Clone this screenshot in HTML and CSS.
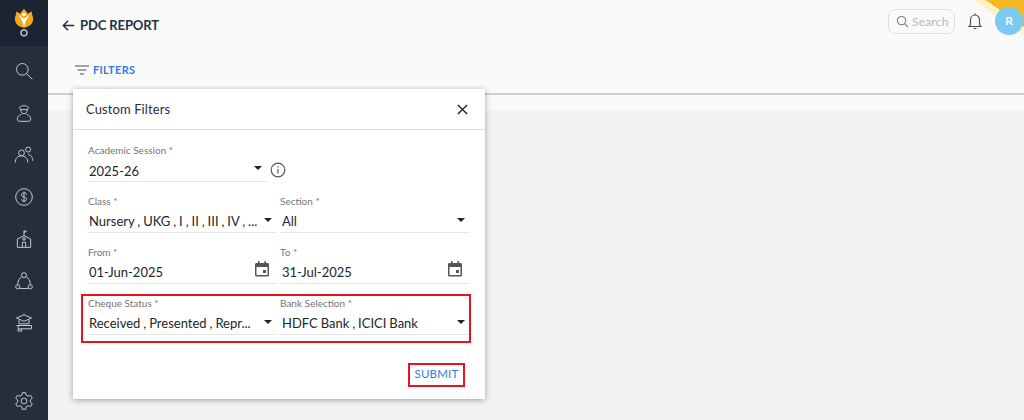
FILE: index.html
```html
<!DOCTYPE html>
<html lang="en">
<head>
<meta charset="utf-8">
<title>PDC Report</title>
<link rel="stylesheet" href="styles.css">
</head>
<body>
<div class="app">
  <nav class="sidebar">
    <div class="logo">
      <svg width="20" height="30" viewBox="0 0 24 36"><path d="M3 5l4 3 5-6 5 6 4-3 2 9c0 6-5 10-11 11C6 24 1 20 1 14z" fill="#f2a81d"/><circle cx="12" cy="9" r="2.200" fill="#fff"/><path d="M5 9l7 5 7-5-5 8-2 7-2-7z" fill="#fff"/><circle cx="12" cy="31" r="3.600" fill="none" stroke="#aab0b6" stroke-width="2"/></svg>
    </div>
    <div class="nav-icons">
      <svg class="nav-icon" viewBox="0 0 24 24"><circle cx="10" cy="10" r="7"/><path d="M15 15l7 7"/></svg>
      <svg class="nav-icon" viewBox="0 0 24 24"><path d="M6.500 5.500c2-3 9-3 11 0l-1.500 2.500H8z"/><path d="M8 8c0 6.500 8 6.500 8 0"/><path d="M9 13.500c-3 1-5 3-5 5.500 0 2 1 3 3 3h10c2 0 3-1 3-3 0-2.500-2-4.500-5-5.500"/></svg>
      <svg class="nav-icon" viewBox="0 0 24 24"><circle cx="9" cy="9.500" r="3.500"/><path d="M1.500 21c0-5 3-8 7.500-8s7.500 3 7.500 8"/><circle cx="17" cy="5.500" r="3"/><path d="M17 11.500c3 0 5.500 3 5.500 7.500"/></svg>
      <svg class="nav-icon" viewBox="0 0 24 24"><circle cx="12" cy="12" r="10"/><path d="M15 9c0-1.500-1.500-2-3-2s-3 .8-3 2.500 1.500 2 3 2.500 3 1 3 2.500-1.500 2.500-3 2.500-3-.8-3-2M12 5.500v13"/></svg>
      <svg class="nav-icon" viewBox="0 0 24 24"><path d="M4 22V12l8-4 8 4v10z"/><path d="M12 8V2l3 1-3 1"/><circle cx="12" cy="12" r="1.500"/><path d="M10 22v-6h4v6"/></svg>
      <svg class="nav-icon" viewBox="0 0 24 24"><circle cx="12" cy="5" r="3"/><circle cx="4.500" cy="19" r="2.500"/><circle cx="19.500" cy="19" r="2.500"/><path d="M9.500 6.500C6.500 8.500 4.500 12 4.300 16.500M14.500 6.500c3 2 5 5.500 5.200 10M7 21h10"/></svg>
      <svg class="nav-icon" viewBox="0 0 24 24"><path d="M12 2l9 4-9 4-9-4z"/><path d="M6 8v5h12V8M5 15h16v4H5zM3 15l4 0M5 19v3l2-1 2 1v-3"/></svg>
    </div>
    <svg class="nav-icon gear" viewBox="0 0 24 24"><circle cx="12" cy="12" r="3.500"/><path d="M10 2h4l.6 3 2.400 1.300 2.900-1 2 3.400-2.300 2 0 2.600 2.300 2-2 3.400-2.900-1-2.400 1.300-.6 3h-4l-.6-3-2.400-1.300-2.900 1-2-3.400 2.300-2 0-2.600-2.300-2 2-3.400 2.900 1L9.400 5z"/></svg>
  </nav>

  <main class="main">
    <header class="topbar">
      <svg class="back" viewBox="0 0 16 16"><path d="M14 8H2.500M7.500 3l-5 5 5 5"/></svg>
      <h1 class="title">PDC REPORT</h1>
      <div class="search">
        <svg class="search-icon" viewBox="0 0 14 14"><circle cx="6" cy="6" r="4.500"/><path d="M9.300 9.300L13 13"/></svg>
        <span>Search</span>
      </div>
      <svg class="bell" viewBox="0 0 16 18"><path d="M2 14h12l-1.500-2V7.500C12.500 4.500 10.500 2.500 8 2.500S3.500 4.500 3.500 7.500V12z"/><path d="M8 1v1.500M6.500 16h3"/></svg>
      <div class="avatar">R</div>
    </header>
    <div class="filterbar">
      <svg class="filter-icon" viewBox="0 0 14 10"><path d="M0 1h14M2.500 5h9M5 9h4"/></svg>
      <span class="filter-label">FILTERS</span>
    </div>
    <div class="tablehead"></div>
    <div class="content"></div>
  </main>

  <section class="modal">
    <div class="modal-head">
      <h2 class="modal-title">Custom Filters</h2>
      <svg class="close" viewBox="0 0 12 12"><path d="M1 1l10 10M11 1L1 11"/></svg>
    </div>
    <div class="modal-body">
      <div class="row">
        <div class="field session">
          <label class="label">Academic Session *</label>
          <div class="control"><span class="value">2025-26</span><i class="caret"></i></div>
        </div>
        <svg class="info" viewBox="0 0 16 16"><circle cx="8" cy="8" r="6.800"/><path d="M8 7v4.500M8 4.300v1.300"/></svg>
      </div>
      <div class="row two">
        <div class="field">
          <label class="label">Class *</label>
          <div class="control"><span class="value">Nursery , UKG , I , II , III , IV , ...</span><i class="caret"></i></div>
        </div>
        <div class="field">
          <label class="label">Section *</label>
          <div class="control"><span class="value">All</span><i class="caret"></i></div>
        </div>
      </div>
      <div class="row two">
        <div class="field">
          <label class="label">From *</label>
          <div class="control"><span class="value">01-Jun-2025</span><svg class="cal" viewBox="0 0 14 16"><path d="M0 3.500C0 2.600.6 2 1.500 2H3V0h1.500v2h5V0H11v2h1.500c.9 0 1.500.6 1.500 1.500V14c0 .9-.6 1.500-1.500 1.500h-11C.6 15.500 0 14.900 0 14zM1.500 6v8h11V6zM8 9h3v3H8z"/></svg></div>
        </div>
        <div class="field">
          <label class="label">To *</label>
          <div class="control"><span class="value">31-Jul-2025</span><svg class="cal" viewBox="0 0 14 16"><path d="M0 3.500C0 2.600.6 2 1.500 2H3V0h1.500v2h5V0H11v2h1.500c.9 0 1.500.6 1.500 1.500V14c0 .9-.6 1.500-1.500 1.500h-11C.6 15.500 0 14.900 0 14zM1.500 6v8h11V6zM8 9h3v3H8z"/></svg></div>
        </div>
      </div>
      <div class="row two marked">
        <div class="field">
          <label class="label">Cheque Status *</label>
          <div class="control"><span class="value">Received , Presented , Repr...</span><i class="caret"></i></div>
        </div>
        <div class="field">
          <label class="label">Bank Selection *</label>
          <div class="control"><span class="value">HDFC Bank , ICICI Bank</span><i class="caret"></i></div>
        </div>
      </div>
      <div class="actions"><button class="submit">SUBMIT</button></div>
    </div>
  </section>
</div>
</body>
</html>
```
FILE: styles.css
```css
* { box-sizing: border-box; }
html, body { margin: 0; height: 100%; overflow: hidden; }
body { font-family: "Lato", "Noto Sans", sans-serif; color: #2b2f33; background: #f1f3f3; }
.app { position: relative; display: flex; width: 1024px; height: 420px; overflow: hidden; }

.sidebar { width: 48px; flex: none; display: flex; flex-direction: column; align-items: center; background: #252e3a; }
.logo { width: 100%; height: 46px; flex: none; display: flex; justify-content: center; align-items: flex-start; padding-top: 7px; background: #1a2433; }
.logo svg { display: block; }
.nav-icons { display: flex; flex-direction: column; align-items: center; gap: 22px; padding-top: 15px; }
.nav-icon { display: block; width: 20px; height: 20px; fill: none; stroke: #c3c8cd; stroke-width: 1.200; }
.gear { margin-top: auto; margin-bottom: 9px; }

.main { flex: 1; display: flex; flex-direction: column; min-width: 0; }
.topbar { position: relative; height: 46px; flex: none; display: flex; align-items: center; padding-left: 13px; background: #fafafa; }
.topbar::before { content: ""; position: absolute; right: 0; top: 0; width: 60px; height: 46px; background: linear-gradient(215deg, #f5b921 0 22px, #fdf0c8 22px 29px, transparent 29px); clip-path: polygon(5px 0, 100% 0, 100% 100%); }
.back { width: 15px; height: 15px; margin-top: 4px; fill: none; stroke: #1f3040; stroke-width: 1.500; }
.title { margin: 4px 0 0 4px; font-size: 13px; line-height: 20px; font-weight: 700; color: #1e3346; letter-spacing: -.1px; }
.search { position: relative; margin: 0 0 4px auto; width: 67px; height: 25px; display: flex; align-items: center; gap: 3px; padding-left: 7px; border: 1px solid #e0e0e0; border-radius: 7px; font-size: 12px; color: #b8b8b8; letter-spacing: .2px; background: #fafafa; }
.search-icon { width: 13px; height: 13px; flex: none; fill: none; stroke: #777; stroke-width: 1.100; }
.bell { position: relative; width: 16px; height: 19px; margin: 0 0 4px 12px; fill: none; stroke: #4a4a4a; stroke-width: 1.100; }
.avatar { position: relative; width: 28px; height: 28px; margin: 0 1px 5px 12px; flex: none; border-radius: 50%; background: #7cc9f2; color: #fff; font-size: 12px; font-weight: 700; display: flex; align-items: center; justify-content: center; }

.filterbar { height: 47px; flex: none; display: flex; align-items: center; gap: 4px; padding: 0 0 0 27px; background: #fafafa; }
.filter-icon { width: 14px; height: 10px; fill: none; stroke: #4a4a4a; stroke-width: 1.200; }
.filter-label { font-size: 11px; font-weight: 700; color: #2f7ee6; letter-spacing: .3px; }
.tablehead { height: 17px; flex: none; background: #fafafa; border-top: 2px solid #cfcfcf; }
.content { flex: 1; background: #f1f3f3; }

.modal { position: absolute; left: 73px; top: 89px; width: 412px; height: 310px; background: #fff; box-shadow: 0 1px 6px rgba(0,0,0,.35); }
.modal-head { height: 41px; display: flex; align-items: center; justify-content: space-between; padding: 0 17px 0 13px; border-bottom: 1px solid #dcdfe2; }
.modal-title { margin: 0; font-size: 13px; font-weight: 400; color: #2b2f33; letter-spacing: .1px; }
.close { width: 11px; height: 11px; fill: none; stroke: #222; stroke-width: 1.500; }
.modal-body { display: flex; flex-direction: column; padding: 7px 15px 0; }
.row { display: flex; align-items: center; height: 51px; }
.row.two { display: grid; grid-template-columns: 189px 190px; column-gap: 3px; }
.session { width: 179px; }
.session .caret { margin-top: -6px; }
.session .control { padding-top: 2px; }
.info { width: 16px; height: 16px; margin: 14px 0 0 3px; fill: none; stroke: #555; stroke-width: 1.200; }
.field { display: flex; flex-direction: column; min-width: 0; }
.label { font-size: 10px; line-height: 13px; color: #757575; }
.control { display: flex; align-items: center; justify-content: space-between; height: 23px; padding: 0 5px 0 1px; border-bottom: 1px solid #e6e6e6; margin-top: 2px; }
.field + .field .control { padding-left: 2px; }
.value { font-size: 13px; color: #22262a; word-spacing: -.4px; white-space: nowrap; }
.caret { width: 0; height: 0; flex: none; margin-top: -2px; border-left: 4px solid transparent; border-right: 4px solid transparent; border-top: 4px solid #222; }
.cal { width: 14px; height: 16px; fill: #555; margin-right: 3px; margin-top: -5px; }
.marked { position: relative; }
.marked::after { content: ""; position: absolute; left: -7px; right: -1px; top: 4px; bottom: -2px; border: 2px solid #e8141c; pointer-events: none; }
.actions { display: flex; justify-content: flex-end; padding: 22px 5px 0 0; }
.submit { width: 57px; height: 24px; padding: 0 0 3px; border: 2px solid #e8141c; background: #fff; color: #2f7ee6; font: 400 11.500px "Lato", sans-serif; letter-spacing: .2px; }
```
